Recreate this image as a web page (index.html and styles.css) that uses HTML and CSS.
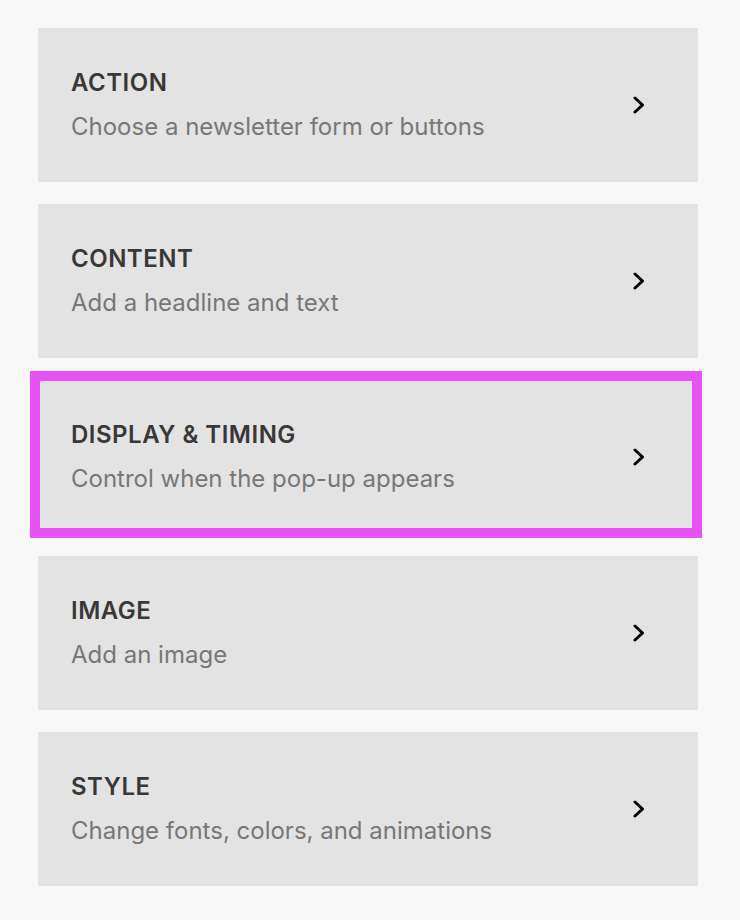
FILE: index.html
```html
<!DOCTYPE html>
<html lang="en">
<head>
<meta charset="utf-8">
<title>Pop-up settings</title>
<link rel="stylesheet" href="styles.css">
</head>
<body>
<div class="panel">
  <div class="card">
    <div class="text">
      <div class="title">ACTION</div>
      <div class="desc">Choose a newsletter form or buttons</div>
    </div>
    <svg class="chev" viewBox="0 0 12 18" width="12" height="18"><path d="M2 2 L9.5 9 L2 16" fill="none" stroke="#000" stroke-width="3" stroke-linecap="round" stroke-linejoin="round"/></svg>
  </div>
  <div class="card">
    <div class="text">
      <div class="title">CONTENT</div>
      <div class="desc">Add a headline and text</div>
    </div>
    <svg class="chev" viewBox="0 0 12 18" width="12" height="18"><path d="M2 2 L9.5 9 L2 16" fill="none" stroke="#000" stroke-width="3" stroke-linecap="round" stroke-linejoin="round"/></svg>
  </div>
  <div class="card highlighted">
    <div class="text">
      <div class="title">DISPLAY &amp; TIMING</div>
      <div class="desc">Control when the pop-up appears</div>
    </div>
    <svg class="chev" viewBox="0 0 12 18" width="12" height="18"><path d="M2 2 L9.5 9 L2 16" fill="none" stroke="#000" stroke-width="3" stroke-linecap="round" stroke-linejoin="round"/></svg>
    <div class="highlight-ring"></div>
  </div>
  <div class="card">
    <div class="text">
      <div class="title">IMAGE</div>
      <div class="desc">Add an image</div>
    </div>
    <svg class="chev" viewBox="0 0 12 18" width="12" height="18"><path d="M2 2 L9.5 9 L2 16" fill="none" stroke="#000" stroke-width="3" stroke-linecap="round" stroke-linejoin="round"/></svg>
  </div>
  <div class="card">
    <div class="text">
      <div class="title">STYLE</div>
      <div class="desc">Change fonts, colors, and animations</div>
    </div>
    <svg class="chev" viewBox="0 0 12 18" width="12" height="18"><path d="M2 2 L9.5 9 L2 16" fill="none" stroke="#000" stroke-width="3" stroke-linecap="round" stroke-linejoin="round"/></svg>
  </div>
</div>
</body>
</html>
```
FILE: styles.css
```css
html, body {
  margin: 0;
  padding: 0;
  background: #f8f8f8;
}
body {
  font-family: Inter, "Liberation Sans", sans-serif;
  height: 920px;
}
.panel {
  display: flex;
  flex-direction: column;
  gap: 22px;
  padding: 28px 0 0 38px;
  width: 660px;
}
.card {
  position: relative;
  height: 154px;
  background: #e3e3e3;
  display: flex;
  align-items: center;
  justify-content: space-between;
  padding: 0 53px 0 33px;
  box-sizing: border-box;
}
.text {
  display: flex;
  flex-direction: column;
  gap: 16px;
}
.title {
  font-size: 24px;
  font-weight: 600;
  color: #383838;
  letter-spacing: 0.5px;
  line-height: 28px;
}
.desc {
  font-size: 24px;
  color: #777;
  line-height: 28px;
}
.chev {
  display: block;
}
.highlight-ring {
  position: absolute;
  left: -8px;
  top: -9px;
  right: -4px;
  bottom: -4px;
  border: 10px solid #e752f2;
  pointer-events: none;
}
```
